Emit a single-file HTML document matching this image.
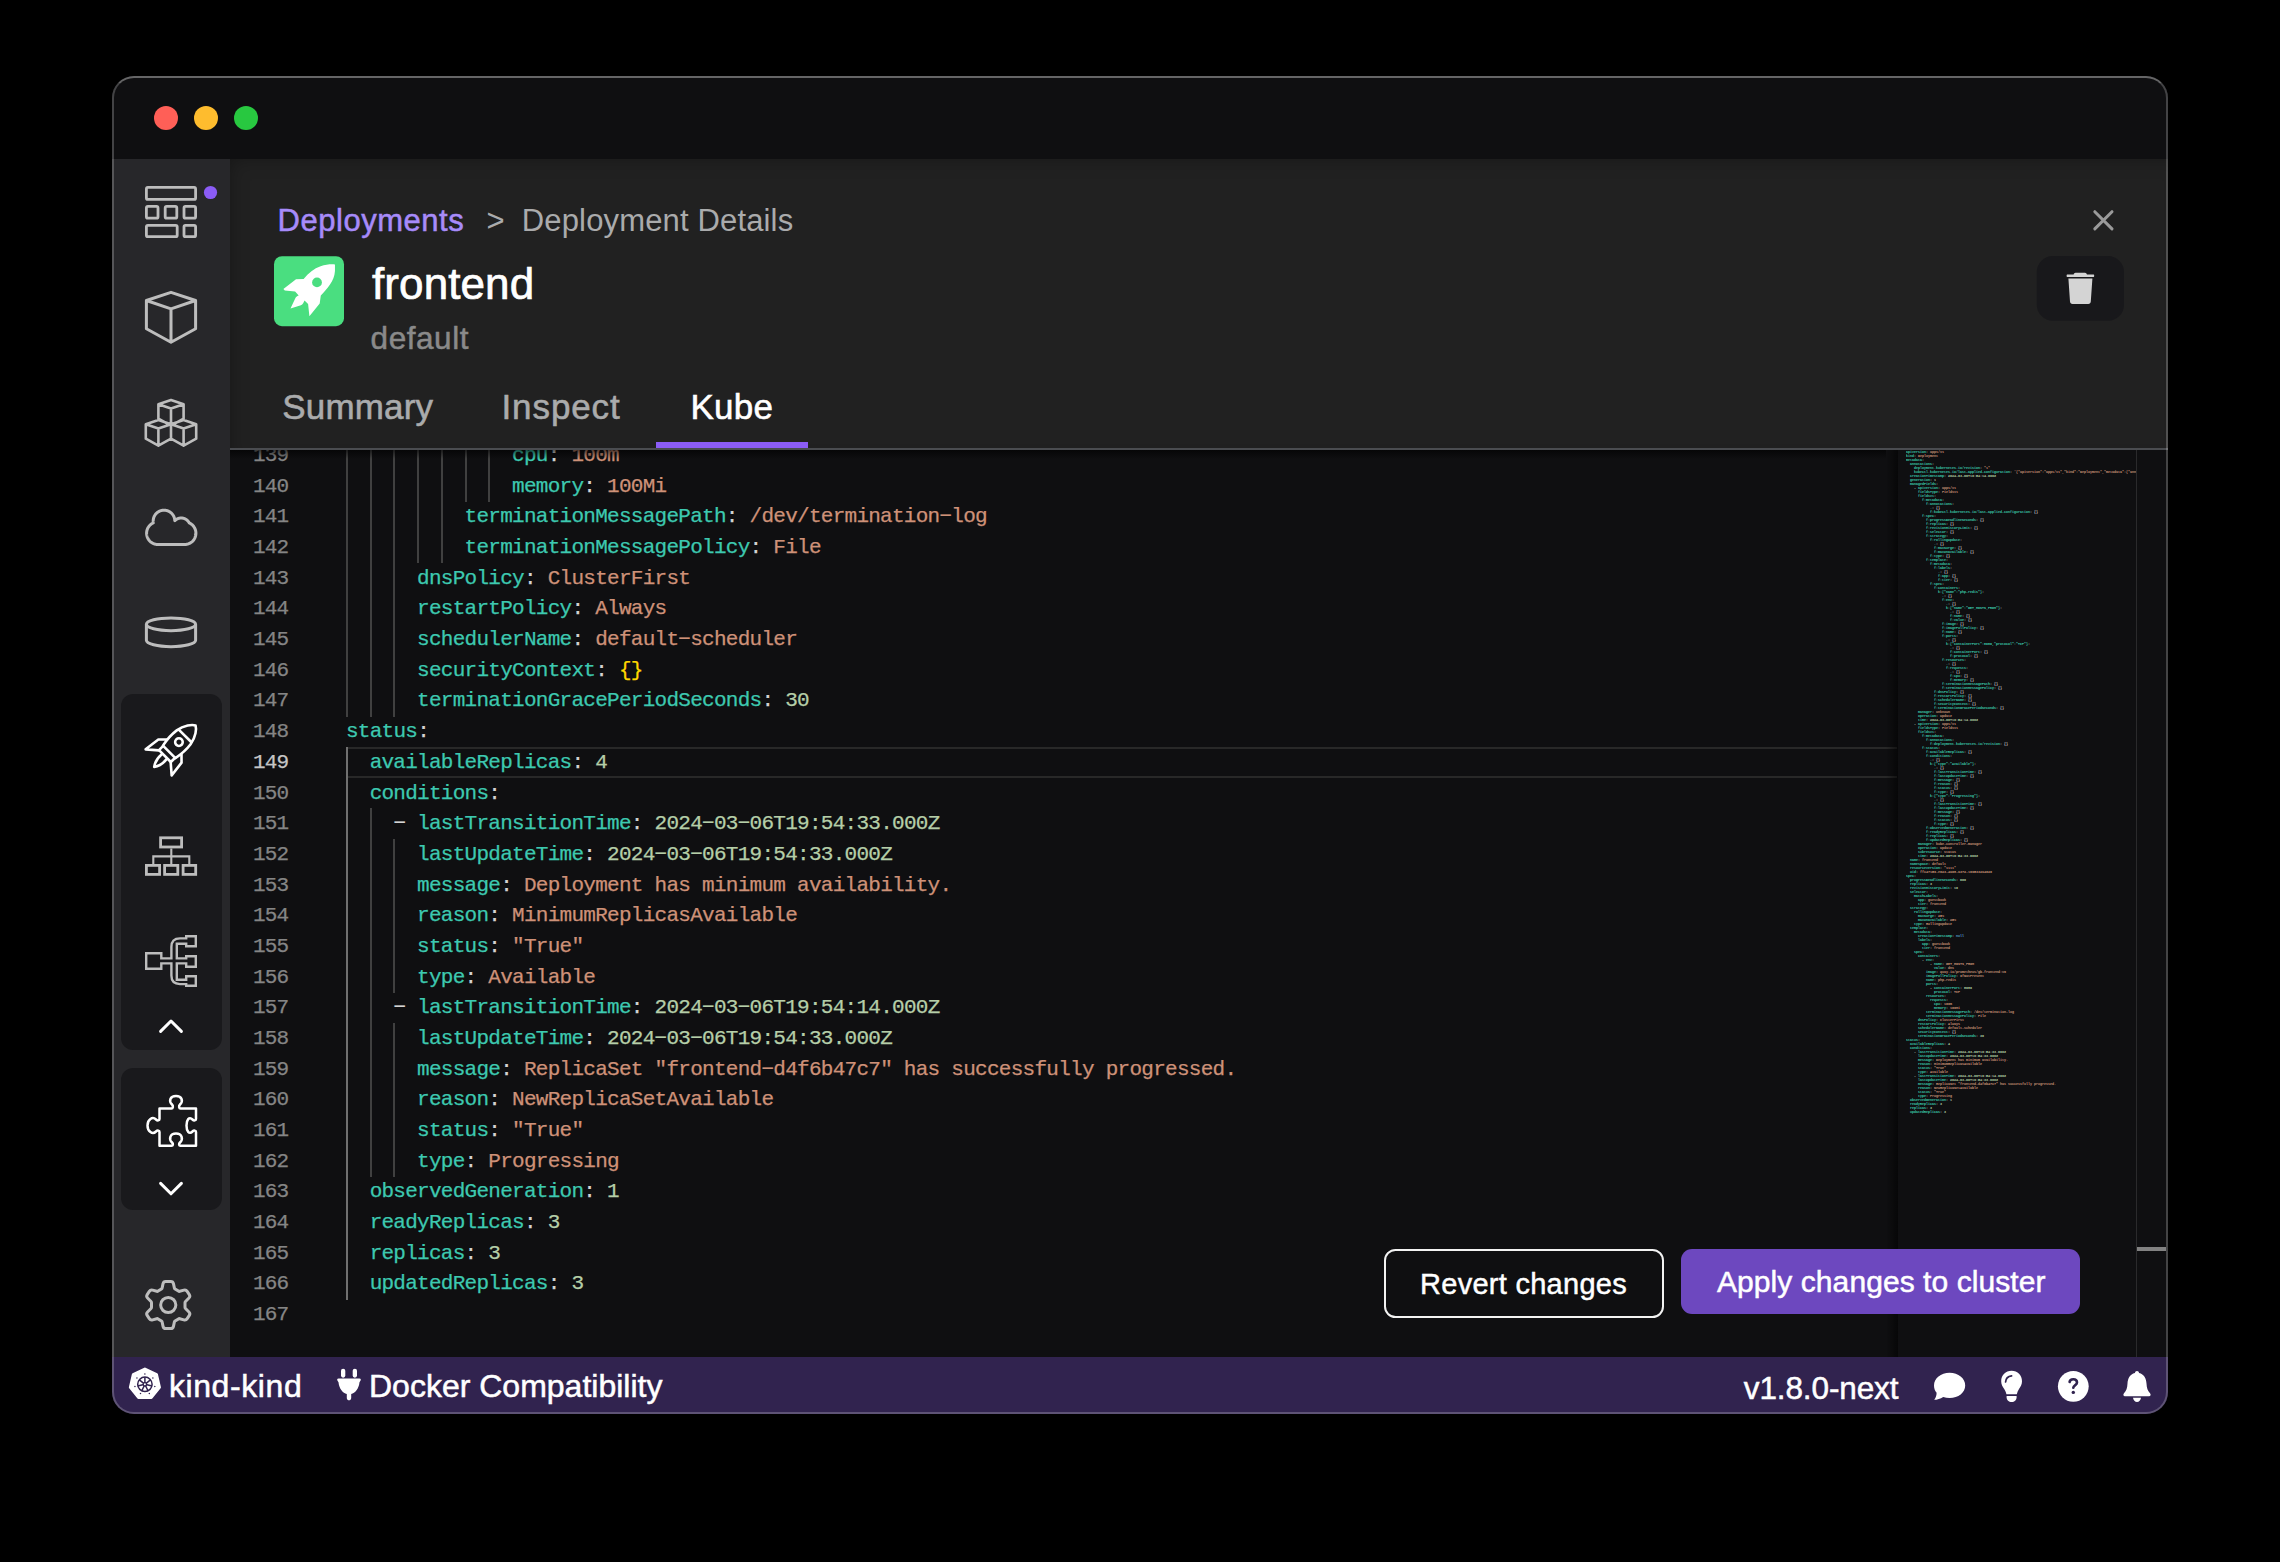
<!DOCTYPE html>
<html><head><meta charset="utf-8"><title>Podman Desktop - Kube</title>
<style>
html,body{margin:0;padding:0;background:#000;font-family:"Liberation Sans",sans-serif;width:2280px;height:1562px;overflow:hidden}
.win{position:absolute;left:112px;top:76px;width:2056px;height:1338px;border-radius:22px;overflow:hidden;background:#0f0f11}
.inner{position:absolute;left:-112px;top:-76px;width:2280px;height:1562px}
.t{position:absolute;white-space:pre;font-family:"Liberation Sans",sans-serif}
.m{position:absolute;white-space:pre;-webkit-text-stroke:0.25px currentColor;font-family:"Liberation Mono",monospace;font-size:21px;line-height:30px;letter-spacing:-0.730px}
.ln{left:240px;width:48.5px;text-align:right}
.abs{position:absolute}
</style></head><body>
<div class="win"><div class="inner">

<div class="abs" style="left:112px;top:76px;width:2056px;height:83px;background:#0f0f11"></div>
<div class="abs" style="left:153.8px;top:105.8px;width:24.4px;height:24.4px;border-radius:50%;background:#ff5f57"></div>
<div class="abs" style="left:193.8px;top:105.8px;width:24.4px;height:24.4px;border-radius:50%;background:#febc2e"></div>
<div class="abs" style="left:233.8px;top:105.8px;width:24.4px;height:24.4px;border-radius:50%;background:#28c840"></div>
<div class="abs" style="left:112px;top:159px;width:118px;height:1198px;background:#27272a"></div>
<div class="abs" style="left:121.4px;top:693.8px;width:100.4px;height:356.2px;border-radius:12px;background:#19191c"></div>
<div class="abs" style="left:121.4px;top:1068px;width:100.4px;height:142px;border-radius:12px;background:#19191c"></div>
<div class="abs" style="left:230px;top:159px;width:1938px;height:289px;background:#212121;box-shadow:inset 8px 8px 20px -10px rgba(0,0,0,0.35)"></div>
<div class="abs" style="left:230px;top:448px;width:1938px;height:2px;background:#4a4c50"></div>
<div class="abs" style="left:230px;top:450px;width:1938px;height:907px;background:#0f0f11;overflow:hidden"></div>
<div class="abs" style="left:0;top:450px;width:2280px;height:907px;overflow:hidden"><div class="abs" style="left:0;top:-450px;width:2280px;height:1562px">
<div style="position:absolute;left:346px;top:747.12px;width:1551px;height:26.68px;border-top:2px solid #282828;border-bottom:2px solid #282828"></div>
<div style="position:absolute;left:345.90px;top:440.12px;width:2px;height:31.18px;background:#404040"></div>
<div style="position:absolute;left:369.64px;top:440.12px;width:2px;height:31.18px;background:#404040"></div>
<div style="position:absolute;left:393.38px;top:440.12px;width:2px;height:31.18px;background:#404040"></div>
<div style="position:absolute;left:417.12px;top:440.12px;width:2px;height:31.18px;background:#404040"></div>
<div style="position:absolute;left:440.86px;top:440.12px;width:2px;height:31.18px;background:#404040"></div>
<div style="position:absolute;left:464.60px;top:440.12px;width:2px;height:31.18px;background:#404040"></div>
<div style="position:absolute;left:488.34px;top:440.12px;width:2px;height:31.18px;background:#404040"></div>
<div style="position:absolute;left:345.90px;top:470.80px;width:2px;height:31.18px;background:#404040"></div>
<div style="position:absolute;left:369.64px;top:470.80px;width:2px;height:31.18px;background:#404040"></div>
<div style="position:absolute;left:393.38px;top:470.80px;width:2px;height:31.18px;background:#404040"></div>
<div style="position:absolute;left:417.12px;top:470.80px;width:2px;height:31.18px;background:#404040"></div>
<div style="position:absolute;left:440.86px;top:470.80px;width:2px;height:31.18px;background:#404040"></div>
<div style="position:absolute;left:464.60px;top:470.80px;width:2px;height:31.18px;background:#404040"></div>
<div style="position:absolute;left:488.34px;top:470.80px;width:2px;height:31.18px;background:#404040"></div>
<div style="position:absolute;left:345.90px;top:501.48px;width:2px;height:31.18px;background:#404040"></div>
<div style="position:absolute;left:369.64px;top:501.48px;width:2px;height:31.18px;background:#404040"></div>
<div style="position:absolute;left:393.38px;top:501.48px;width:2px;height:31.18px;background:#404040"></div>
<div style="position:absolute;left:417.12px;top:501.48px;width:2px;height:31.18px;background:#404040"></div>
<div style="position:absolute;left:440.86px;top:501.48px;width:2px;height:31.18px;background:#404040"></div>
<div style="position:absolute;left:345.90px;top:532.16px;width:2px;height:31.18px;background:#404040"></div>
<div style="position:absolute;left:369.64px;top:532.16px;width:2px;height:31.18px;background:#404040"></div>
<div style="position:absolute;left:393.38px;top:532.16px;width:2px;height:31.18px;background:#404040"></div>
<div style="position:absolute;left:417.12px;top:532.16px;width:2px;height:31.18px;background:#404040"></div>
<div style="position:absolute;left:440.86px;top:532.16px;width:2px;height:31.18px;background:#404040"></div>
<div style="position:absolute;left:345.90px;top:562.84px;width:2px;height:31.18px;background:#404040"></div>
<div style="position:absolute;left:369.64px;top:562.84px;width:2px;height:31.18px;background:#404040"></div>
<div style="position:absolute;left:393.38px;top:562.84px;width:2px;height:31.18px;background:#404040"></div>
<div style="position:absolute;left:345.90px;top:593.52px;width:2px;height:31.18px;background:#404040"></div>
<div style="position:absolute;left:369.64px;top:593.52px;width:2px;height:31.18px;background:#404040"></div>
<div style="position:absolute;left:393.38px;top:593.52px;width:2px;height:31.18px;background:#404040"></div>
<div style="position:absolute;left:345.90px;top:624.20px;width:2px;height:31.18px;background:#404040"></div>
<div style="position:absolute;left:369.64px;top:624.20px;width:2px;height:31.18px;background:#404040"></div>
<div style="position:absolute;left:393.38px;top:624.20px;width:2px;height:31.18px;background:#404040"></div>
<div style="position:absolute;left:345.90px;top:654.88px;width:2px;height:31.18px;background:#404040"></div>
<div style="position:absolute;left:369.64px;top:654.88px;width:2px;height:31.18px;background:#404040"></div>
<div style="position:absolute;left:393.38px;top:654.88px;width:2px;height:31.18px;background:#404040"></div>
<div style="position:absolute;left:345.90px;top:685.56px;width:2px;height:31.18px;background:#404040"></div>
<div style="position:absolute;left:369.64px;top:685.56px;width:2px;height:31.18px;background:#404040"></div>
<div style="position:absolute;left:393.38px;top:685.56px;width:2px;height:31.18px;background:#404040"></div>
<div style="position:absolute;left:345.90px;top:746.92px;width:2px;height:31.18px;background:#707070"></div>
<div style="position:absolute;left:345.90px;top:777.60px;width:2px;height:31.18px;background:#707070"></div>
<div style="position:absolute;left:345.90px;top:1176.44px;width:2px;height:31.18px;background:#707070"></div>
<div style="position:absolute;left:345.90px;top:1207.12px;width:2px;height:31.18px;background:#707070"></div>
<div style="position:absolute;left:345.90px;top:1237.80px;width:2px;height:31.18px;background:#707070"></div>
<div style="position:absolute;left:345.90px;top:1268.48px;width:2px;height:31.18px;background:#707070"></div>
<div style="position:absolute;left:345.90px;top:808.28px;width:2px;height:31.18px;background:#707070"></div>
<div style="position:absolute;left:369.64px;top:808.28px;width:2px;height:31.18px;background:#404040"></div>
<div style="position:absolute;left:345.90px;top:992.36px;width:2px;height:31.18px;background:#707070"></div>
<div style="position:absolute;left:369.64px;top:992.36px;width:2px;height:31.18px;background:#404040"></div>
<div style="position:absolute;left:345.90px;top:838.96px;width:2px;height:31.18px;background:#707070"></div>
<div style="position:absolute;left:369.64px;top:838.96px;width:2px;height:31.18px;background:#404040"></div>
<div style="position:absolute;left:393.38px;top:838.96px;width:2px;height:31.18px;background:#404040"></div>
<div style="position:absolute;left:345.90px;top:869.64px;width:2px;height:31.18px;background:#707070"></div>
<div style="position:absolute;left:369.64px;top:869.64px;width:2px;height:31.18px;background:#404040"></div>
<div style="position:absolute;left:393.38px;top:869.64px;width:2px;height:31.18px;background:#404040"></div>
<div style="position:absolute;left:345.90px;top:900.32px;width:2px;height:31.18px;background:#707070"></div>
<div style="position:absolute;left:369.64px;top:900.32px;width:2px;height:31.18px;background:#404040"></div>
<div style="position:absolute;left:393.38px;top:900.32px;width:2px;height:31.18px;background:#404040"></div>
<div style="position:absolute;left:345.90px;top:931.00px;width:2px;height:31.18px;background:#707070"></div>
<div style="position:absolute;left:369.64px;top:931.00px;width:2px;height:31.18px;background:#404040"></div>
<div style="position:absolute;left:393.38px;top:931.00px;width:2px;height:31.18px;background:#404040"></div>
<div style="position:absolute;left:345.90px;top:961.68px;width:2px;height:31.18px;background:#707070"></div>
<div style="position:absolute;left:369.64px;top:961.68px;width:2px;height:31.18px;background:#404040"></div>
<div style="position:absolute;left:393.38px;top:961.68px;width:2px;height:31.18px;background:#404040"></div>
<div style="position:absolute;left:345.90px;top:1023.04px;width:2px;height:31.18px;background:#707070"></div>
<div style="position:absolute;left:369.64px;top:1023.04px;width:2px;height:31.18px;background:#404040"></div>
<div style="position:absolute;left:393.38px;top:1023.04px;width:2px;height:31.18px;background:#404040"></div>
<div style="position:absolute;left:345.90px;top:1053.72px;width:2px;height:31.18px;background:#707070"></div>
<div style="position:absolute;left:369.64px;top:1053.72px;width:2px;height:31.18px;background:#404040"></div>
<div style="position:absolute;left:393.38px;top:1053.72px;width:2px;height:31.18px;background:#404040"></div>
<div style="position:absolute;left:345.90px;top:1084.40px;width:2px;height:31.18px;background:#707070"></div>
<div style="position:absolute;left:369.64px;top:1084.40px;width:2px;height:31.18px;background:#404040"></div>
<div style="position:absolute;left:393.38px;top:1084.40px;width:2px;height:31.18px;background:#404040"></div>
<div style="position:absolute;left:345.90px;top:1115.08px;width:2px;height:31.18px;background:#707070"></div>
<div style="position:absolute;left:369.64px;top:1115.08px;width:2px;height:31.18px;background:#404040"></div>
<div style="position:absolute;left:393.38px;top:1115.08px;width:2px;height:31.18px;background:#404040"></div>
<div style="position:absolute;left:345.90px;top:1145.76px;width:2px;height:31.18px;background:#707070"></div>
<div style="position:absolute;left:369.64px;top:1145.76px;width:2px;height:31.18px;background:#404040"></div>
<div style="position:absolute;left:393.38px;top:1145.76px;width:2px;height:31.18px;background:#404040"></div>
<div class="m ln" style="top:441.02px;color:#858585">139</div>
<div class="m" style="left:512.08px;top:441.02px"><span style="color:#3dc9b0">cpu</span><span style="color:#d4d4d4">: </span><span style="color:#ce9178">100m</span></div>
<div class="m ln" style="top:471.70px;color:#858585">140</div>
<div class="m" style="left:512.08px;top:471.70px"><span style="color:#3dc9b0">memory</span><span style="color:#d4d4d4">: </span><span style="color:#ce9178">100Mi</span></div>
<div class="m ln" style="top:502.38px;color:#858585">141</div>
<div class="m" style="left:464.60px;top:502.38px"><span style="color:#3dc9b0">terminationMessagePath</span><span style="color:#d4d4d4">: </span><span style="color:#ce9178">/dev/termination&#8722;log</span></div>
<div class="m ln" style="top:533.06px;color:#858585">142</div>
<div class="m" style="left:464.60px;top:533.06px"><span style="color:#3dc9b0">terminationMessagePolicy</span><span style="color:#d4d4d4">: </span><span style="color:#ce9178">File</span></div>
<div class="m ln" style="top:563.74px;color:#858585">143</div>
<div class="m" style="left:417.12px;top:563.74px"><span style="color:#3dc9b0">dnsPolicy</span><span style="color:#d4d4d4">: </span><span style="color:#ce9178">ClusterFirst</span></div>
<div class="m ln" style="top:594.42px;color:#858585">144</div>
<div class="m" style="left:417.12px;top:594.42px"><span style="color:#3dc9b0">restartPolicy</span><span style="color:#d4d4d4">: </span><span style="color:#ce9178">Always</span></div>
<div class="m ln" style="top:625.10px;color:#858585">145</div>
<div class="m" style="left:417.12px;top:625.10px"><span style="color:#3dc9b0">schedulerName</span><span style="color:#d4d4d4">: </span><span style="color:#ce9178">default&#8722;scheduler</span></div>
<div class="m ln" style="top:655.78px;color:#858585">146</div>
<div class="m" style="left:417.12px;top:655.78px"><span style="color:#3dc9b0">securityContext</span><span style="color:#d4d4d4">: </span><span style="color:#ffd700">{}</span></div>
<div class="m ln" style="top:686.46px;color:#858585">147</div>
<div class="m" style="left:417.12px;top:686.46px"><span style="color:#3dc9b0">terminationGracePeriodSeconds</span><span style="color:#d4d4d4">: </span><span style="color:#b5cea8">30</span></div>
<div class="m ln" style="top:717.14px;color:#858585">148</div>
<div class="m" style="left:345.90px;top:717.14px"><span style="color:#3dc9b0">status</span><span style="color:#d4d4d4">:</span></div>
<div class="m ln" style="top:747.82px;color:#c6c6c6">149</div>
<div class="m" style="left:369.64px;top:747.82px"><span style="color:#3dc9b0">availableReplicas</span><span style="color:#d4d4d4">: </span><span style="color:#b5cea8">4</span></div>
<div class="m ln" style="top:778.50px;color:#858585">150</div>
<div class="m" style="left:369.64px;top:778.50px"><span style="color:#3dc9b0">conditions</span><span style="color:#d4d4d4">:</span></div>
<div class="m ln" style="top:809.18px;color:#858585">151</div>
<div class="m" style="left:393.38px;top:809.18px"><span style="color:#d4d4d4">&#8722; </span><span style="color:#3dc9b0">lastTransitionTime</span><span style="color:#d4d4d4">: </span><span style="color:#b5cea8">2024&#8722;03&#8722;06T19:54:33.000Z</span></div>
<div class="m ln" style="top:839.86px;color:#858585">152</div>
<div class="m" style="left:417.12px;top:839.86px"><span style="color:#3dc9b0">lastUpdateTime</span><span style="color:#d4d4d4">: </span><span style="color:#b5cea8">2024&#8722;03&#8722;06T19:54:33.000Z</span></div>
<div class="m ln" style="top:870.54px;color:#858585">153</div>
<div class="m" style="left:417.12px;top:870.54px"><span style="color:#3dc9b0">message</span><span style="color:#d4d4d4">: </span><span style="color:#ce9178">Deployment has minimum availability.</span></div>
<div class="m ln" style="top:901.22px;color:#858585">154</div>
<div class="m" style="left:417.12px;top:901.22px"><span style="color:#3dc9b0">reason</span><span style="color:#d4d4d4">: </span><span style="color:#ce9178">MinimumReplicasAvailable</span></div>
<div class="m ln" style="top:931.90px;color:#858585">155</div>
<div class="m" style="left:417.12px;top:931.90px"><span style="color:#3dc9b0">status</span><span style="color:#d4d4d4">: </span><span style="color:#ce9178">&quot;True&quot;</span></div>
<div class="m ln" style="top:962.58px;color:#858585">156</div>
<div class="m" style="left:417.12px;top:962.58px"><span style="color:#3dc9b0">type</span><span style="color:#d4d4d4">: </span><span style="color:#ce9178">Available</span></div>
<div class="m ln" style="top:993.26px;color:#858585">157</div>
<div class="m" style="left:393.38px;top:993.26px"><span style="color:#d4d4d4">&#8722; </span><span style="color:#3dc9b0">lastTransitionTime</span><span style="color:#d4d4d4">: </span><span style="color:#b5cea8">2024&#8722;03&#8722;06T19:54:14.000Z</span></div>
<div class="m ln" style="top:1023.94px;color:#858585">158</div>
<div class="m" style="left:417.12px;top:1023.94px"><span style="color:#3dc9b0">lastUpdateTime</span><span style="color:#d4d4d4">: </span><span style="color:#b5cea8">2024&#8722;03&#8722;06T19:54:33.000Z</span></div>
<div class="m ln" style="top:1054.62px;color:#858585">159</div>
<div class="m" style="left:417.12px;top:1054.62px"><span style="color:#3dc9b0">message</span><span style="color:#d4d4d4">: </span><span style="color:#ce9178">ReplicaSet &quot;frontend&#8722;d4f6b47c7&quot; has successfully progressed.</span></div>
<div class="m ln" style="top:1085.30px;color:#858585">160</div>
<div class="m" style="left:417.12px;top:1085.30px"><span style="color:#3dc9b0">reason</span><span style="color:#d4d4d4">: </span><span style="color:#ce9178">NewReplicaSetAvailable</span></div>
<div class="m ln" style="top:1115.98px;color:#858585">161</div>
<div class="m" style="left:417.12px;top:1115.98px"><span style="color:#3dc9b0">status</span><span style="color:#d4d4d4">: </span><span style="color:#ce9178">&quot;True&quot;</span></div>
<div class="m ln" style="top:1146.66px;color:#858585">162</div>
<div class="m" style="left:417.12px;top:1146.66px"><span style="color:#3dc9b0">type</span><span style="color:#d4d4d4">: </span><span style="color:#ce9178">Progressing</span></div>
<div class="m ln" style="top:1177.34px;color:#858585">163</div>
<div class="m" style="left:369.64px;top:1177.34px"><span style="color:#3dc9b0">observedGeneration</span><span style="color:#d4d4d4">: </span><span style="color:#b5cea8">1</span></div>
<div class="m ln" style="top:1208.02px;color:#858585">164</div>
<div class="m" style="left:369.64px;top:1208.02px"><span style="color:#3dc9b0">readyReplicas</span><span style="color:#d4d4d4">: </span><span style="color:#b5cea8">3</span></div>
<div class="m ln" style="top:1238.70px;color:#858585">165</div>
<div class="m" style="left:369.64px;top:1238.70px"><span style="color:#3dc9b0">replicas</span><span style="color:#d4d4d4">: </span><span style="color:#b5cea8">3</span></div>
<div class="m ln" style="top:1269.38px;color:#858585">166</div>
<div class="m" style="left:369.64px;top:1269.38px"><span style="color:#3dc9b0">updatedReplicas</span><span style="color:#d4d4d4">: </span><span style="color:#b5cea8">3</span></div>
<div class="m ln" style="top:1300.06px;color:#858585">167</div>
<div class="abs" style="left:1906px;top:450px;width:1380px;height:6000px;overflow:hidden;transform:scale(0.16667);transform-origin:0 0;font-family:'Liberation Mono',monospace;font-size:20px;line-height:24px;white-space:pre;font-weight:700;opacity:1"><div><span style="color:#3dc9b0">apiVersion</span><span style="color:#d4d4d4">:</span> <span style="color:#ce9178">apps/v1</span></div><div><span style="color:#3dc9b0">kind</span><span style="color:#d4d4d4">:</span> <span style="color:#ce9178">Deployment</span></div><div><span style="color:#3dc9b0">metadata</span><span style="color:#d4d4d4">:</span></div><div>  <span style="color:#3dc9b0">annotations</span><span style="color:#d4d4d4">:</span></div><div>    <span style="color:#3dc9b0">deployment.kubernetes.io/revision</span><span style="color:#d4d4d4">:</span> <span style="color:#ce9178">&quot;1&quot;</span></div><div>    <span style="color:#3dc9b0">kubectl.kubernetes.io/last-applied-configuration</span><span style="color:#d4d4d4">:</span> <span style="color:#ce9178">&#x27;{&quot;apiVersion&quot;:&quot;apps/v1&quot;,&quot;kind&quot;:&quot;Deployment&quot;,&quot;metadata&quot;:{&quot;annotations&quot;:{},&quot;name&quot;:&quot;frontend&quot;,&quot;namespace&quot;:&quot;default&quot;},&quot;spec&quot;:{&quot;replicas&quot;:3}}&#x27;</span></div><div>  <span style="color:#3dc9b0">creationTimestamp</span><span style="color:#d4d4d4">:</span> <span style="color:#b5cea8">2024-03-06T19:54:14.000Z</span></div><div>  <span style="color:#3dc9b0">generation</span><span style="color:#d4d4d4">:</span> <span style="color:#b5cea8">1</span></div><div>  <span style="color:#3dc9b0">managedFields</span><span style="color:#d4d4d4">:</span></div><div>    <span style="color:#d4d4d4">- </span><span style="color:#3dc9b0">apiVersion</span><span style="color:#d4d4d4">:</span> <span style="color:#ce9178">apps/v1</span></div><div>      <span style="color:#3dc9b0">fieldsType</span><span style="color:#d4d4d4">:</span> <span style="color:#ce9178">FieldsV1</span></div><div>      <span style="color:#3dc9b0">fieldsV1</span><span style="color:#d4d4d4">:</span></div><div>        <span style="color:#3dc9b0">f:metadata</span><span style="color:#d4d4d4">:</span></div><div>          <span style="color:#3dc9b0">f:annotations</span><span style="color:#d4d4d4">:</span></div><div>            <span style="color:#3dc9b0">.</span><span style="color:#d4d4d4">:</span> <span style="color:#d4d4d4">{}</span></div><div>            <span style="color:#3dc9b0">f:kubectl.kubernetes.io/last-applied-configuration</span><span style="color:#d4d4d4">:</span> <span style="color:#d4d4d4">{}</span></div><div>        <span style="color:#3dc9b0">f:spec</span><span style="color:#d4d4d4">:</span></div><div>          <span style="color:#3dc9b0">f:progressDeadlineSeconds</span><span style="color:#d4d4d4">:</span> <span style="color:#d4d4d4">{}</span></div><div>          <span style="color:#3dc9b0">f:replicas</span><span style="color:#d4d4d4">:</span> <span style="color:#d4d4d4">{}</span></div><div>          <span style="color:#3dc9b0">f:revisionHistoryLimit</span><span style="color:#d4d4d4">:</span> <span style="color:#d4d4d4">{}</span></div><div>          <span style="color:#3dc9b0">f:selector</span><span style="color:#d4d4d4">:</span> <span style="color:#d4d4d4">{}</span></div><div>          <span style="color:#3dc9b0">f:strategy</span><span style="color:#d4d4d4">:</span></div><div>            <span style="color:#3dc9b0">f:rollingUpdate</span><span style="color:#d4d4d4">:</span></div><div>              <span style="color:#3dc9b0">.</span><span style="color:#d4d4d4">:</span> <span style="color:#d4d4d4">{}</span></div><div>              <span style="color:#3dc9b0">f:maxSurge</span><span style="color:#d4d4d4">:</span> <span style="color:#d4d4d4">{}</span></div><div>              <span style="color:#3dc9b0">f:maxUnavailable</span><span style="color:#d4d4d4">:</span> <span style="color:#d4d4d4">{}</span></div><div>            <span style="color:#3dc9b0">f:type</span><span style="color:#d4d4d4">:</span> <span style="color:#d4d4d4">{}</span></div><div>          <span style="color:#3dc9b0">f:template</span><span style="color:#d4d4d4">:</span></div><div>            <span style="color:#3dc9b0">f:metadata</span><span style="color:#d4d4d4">:</span></div><div>              <span style="color:#3dc9b0">f:labels</span><span style="color:#d4d4d4">:</span></div><div>                <span style="color:#3dc9b0">.</span><span style="color:#d4d4d4">:</span> <span style="color:#d4d4d4">{}</span></div><div>                <span style="color:#3dc9b0">f:app</span><span style="color:#d4d4d4">:</span> <span style="color:#d4d4d4">{}</span></div><div>                <span style="color:#3dc9b0">f:tier</span><span style="color:#d4d4d4">:</span> <span style="color:#d4d4d4">{}</span></div><div>            <span style="color:#3dc9b0">f:spec</span><span style="color:#d4d4d4">:</span></div><div>              <span style="color:#3dc9b0">f:containers</span><span style="color:#d4d4d4">:</span></div><div>                <span style="color:#3dc9b0">k:{&quot;name&quot;:&quot;php-redis&quot;}</span><span style="color:#d4d4d4">:</span></div><div>                  <span style="color:#3dc9b0">.</span><span style="color:#d4d4d4">:</span> <span style="color:#d4d4d4">{}</span></div><div>                  <span style="color:#3dc9b0">f:env</span><span style="color:#d4d4d4">:</span></div><div>                    <span style="color:#3dc9b0">.</span><span style="color:#d4d4d4">:</span> <span style="color:#d4d4d4">{}</span></div><div>                    <span style="color:#3dc9b0">k:{&quot;name&quot;:&quot;GET_HOSTS_FROM&quot;}</span><span style="color:#d4d4d4">:</span></div><div>                      <span style="color:#3dc9b0">.</span><span style="color:#d4d4d4">:</span> <span style="color:#d4d4d4">{}</span></div><div>                      <span style="color:#3dc9b0">f:name</span><span style="color:#d4d4d4">:</span> <span style="color:#d4d4d4">{}</span></div><div>                      <span style="color:#3dc9b0">f:value</span><span style="color:#d4d4d4">:</span> <span style="color:#d4d4d4">{}</span></div><div>                  <span style="color:#3dc9b0">f:image</span><span style="color:#d4d4d4">:</span> <span style="color:#d4d4d4">{}</span></div><div>                  <span style="color:#3dc9b0">f:imagePullPolicy</span><span style="color:#d4d4d4">:</span> <span style="color:#d4d4d4">{}</span></div><div>                  <span style="color:#3dc9b0">f:name</span><span style="color:#d4d4d4">:</span> <span style="color:#d4d4d4">{}</span></div><div>                  <span style="color:#3dc9b0">f:ports</span><span style="color:#d4d4d4">:</span></div><div>                    <span style="color:#3dc9b0">.</span><span style="color:#d4d4d4">:</span> <span style="color:#d4d4d4">{}</span></div><div>                    <span style="color:#3dc9b0">k:{&quot;containerPort&quot;:8080,&quot;protocol&quot;:&quot;TCP&quot;}</span><span style="color:#d4d4d4">:</span></div><div>                      <span style="color:#3dc9b0">.</span><span style="color:#d4d4d4">:</span> <span style="color:#d4d4d4">{}</span></div><div>                      <span style="color:#3dc9b0">f:containerPort</span><span style="color:#d4d4d4">:</span> <span style="color:#d4d4d4">{}</span></div><div>                      <span style="color:#3dc9b0">f:protocol</span><span style="color:#d4d4d4">:</span> <span style="color:#d4d4d4">{}</span></div><div>                  <span style="color:#3dc9b0">f:resources</span><span style="color:#d4d4d4">:</span></div><div>                    <span style="color:#3dc9b0">.</span><span style="color:#d4d4d4">:</span> <span style="color:#d4d4d4">{}</span></div><div>                    <span style="color:#3dc9b0">f:requests</span><span style="color:#d4d4d4">:</span></div><div>                      <span style="color:#3dc9b0">.</span><span style="color:#d4d4d4">:</span> <span style="color:#d4d4d4">{}</span></div><div>                      <span style="color:#3dc9b0">f:cpu</span><span style="color:#d4d4d4">:</span> <span style="color:#d4d4d4">{}</span></div><div>                      <span style="color:#3dc9b0">f:memory</span><span style="color:#d4d4d4">:</span> <span style="color:#d4d4d4">{}</span></div><div>                  <span style="color:#3dc9b0">f:terminationMessagePath</span><span style="color:#d4d4d4">:</span> <span style="color:#d4d4d4">{}</span></div><div>                  <span style="color:#3dc9b0">f:terminationMessagePolicy</span><span style="color:#d4d4d4">:</span> <span style="color:#d4d4d4">{}</span></div><div>              <span style="color:#3dc9b0">f:dnsPolicy</span><span style="color:#d4d4d4">:</span> <span style="color:#d4d4d4">{}</span></div><div>              <span style="color:#3dc9b0">f:restartPolicy</span><span style="color:#d4d4d4">:</span> <span style="color:#d4d4d4">{}</span></div><div>              <span style="color:#3dc9b0">f:schedulerName</span><span style="color:#d4d4d4">:</span> <span style="color:#d4d4d4">{}</span></div><div>              <span style="color:#3dc9b0">f:securityContext</span><span style="color:#d4d4d4">:</span> <span style="color:#d4d4d4">{}</span></div><div>              <span style="color:#3dc9b0">f:terminationGracePeriodSeconds</span><span style="color:#d4d4d4">:</span> <span style="color:#d4d4d4">{}</span></div><div>      <span style="color:#3dc9b0">manager</span><span style="color:#d4d4d4">:</span> <span style="color:#ce9178">unknown</span></div><div>      <span style="color:#3dc9b0">operation</span><span style="color:#d4d4d4">:</span> <span style="color:#ce9178">Update</span></div><div>      <span style="color:#3dc9b0">time</span><span style="color:#d4d4d4">:</span> <span style="color:#b5cea8">2024-03-06T19:54:14.000Z</span></div><div>    <span style="color:#d4d4d4">- </span><span style="color:#3dc9b0">apiVersion</span><span style="color:#d4d4d4">:</span> <span style="color:#ce9178">apps/v1</span></div><div>      <span style="color:#3dc9b0">fieldsType</span><span style="color:#d4d4d4">:</span> <span style="color:#ce9178">FieldsV1</span></div><div>      <span style="color:#3dc9b0">fieldsV1</span><span style="color:#d4d4d4">:</span></div><div>        <span style="color:#3dc9b0">f:metadata</span><span style="color:#d4d4d4">:</span></div><div>          <span style="color:#3dc9b0">f:annotations</span><span style="color:#d4d4d4">:</span></div><div>            <span style="color:#3dc9b0">f:deployment.kubernetes.io/revision</span><span style="color:#d4d4d4">:</span> <span style="color:#d4d4d4">{}</span></div><div>        <span style="color:#3dc9b0">f:status</span><span style="color:#d4d4d4">:</span></div><div>          <span style="color:#3dc9b0">f:availableReplicas</span><span style="color:#d4d4d4">:</span> <span style="color:#d4d4d4">{}</span></div><div>          <span style="color:#3dc9b0">f:conditions</span><span style="color:#d4d4d4">:</span></div><div>            <span style="color:#3dc9b0">.</span><span style="color:#d4d4d4">:</span> <span style="color:#d4d4d4">{}</span></div><div>            <span style="color:#3dc9b0">k:{&quot;type&quot;:&quot;Available&quot;}</span><span style="color:#d4d4d4">:</span></div><div>              <span style="color:#3dc9b0">.</span><span style="color:#d4d4d4">:</span> <span style="color:#d4d4d4">{}</span></div><div>              <span style="color:#3dc9b0">f:lastTransitionTime</span><span style="color:#d4d4d4">:</span> <span style="color:#d4d4d4">{}</span></div><div>              <span style="color:#3dc9b0">f:lastUpdateTime</span><span style="color:#d4d4d4">:</span> <span style="color:#d4d4d4">{}</span></div><div>              <span style="color:#3dc9b0">f:message</span><span style="color:#d4d4d4">:</span> <span style="color:#d4d4d4">{}</span></div><div>              <span style="color:#3dc9b0">f:reason</span><span style="color:#d4d4d4">:</span> <span style="color:#d4d4d4">{}</span></div><div>              <span style="color:#3dc9b0">f:status</span><span style="color:#d4d4d4">:</span> <span style="color:#d4d4d4">{}</span></div><div>              <span style="color:#3dc9b0">f:type</span><span style="color:#d4d4d4">:</span> <span style="color:#d4d4d4">{}</span></div><div>            <span style="color:#3dc9b0">k:{&quot;type&quot;:&quot;Progressing&quot;}</span><span style="color:#d4d4d4">:</span></div><div>              <span style="color:#3dc9b0">.</span><span style="color:#d4d4d4">:</span> <span style="color:#d4d4d4">{}</span></div><div>              <span style="color:#3dc9b0">f:lastTransitionTime</span><span style="color:#d4d4d4">:</span> <span style="color:#d4d4d4">{}</span></div><div>              <span style="color:#3dc9b0">f:lastUpdateTime</span><span style="color:#d4d4d4">:</span> <span style="color:#d4d4d4">{}</span></div><div>              <span style="color:#3dc9b0">f:message</span><span style="color:#d4d4d4">:</span> <span style="color:#d4d4d4">{}</span></div><div>              <span style="color:#3dc9b0">f:reason</span><span style="color:#d4d4d4">:</span> <span style="color:#d4d4d4">{}</span></div><div>              <span style="color:#3dc9b0">f:status</span><span style="color:#d4d4d4">:</span> <span style="color:#d4d4d4">{}</span></div><div>              <span style="color:#3dc9b0">f:type</span><span style="color:#d4d4d4">:</span> <span style="color:#d4d4d4">{}</span></div><div>          <span style="color:#3dc9b0">f:observedGeneration</span><span style="color:#d4d4d4">:</span> <span style="color:#d4d4d4">{}</span></div><div>          <span style="color:#3dc9b0">f:readyReplicas</span><span style="color:#d4d4d4">:</span> <span style="color:#d4d4d4">{}</span></div><div>          <span style="color:#3dc9b0">f:replicas</span><span style="color:#d4d4d4">:</span> <span style="color:#d4d4d4">{}</span></div><div>          <span style="color:#3dc9b0">f:updatedReplicas</span><span style="color:#d4d4d4">:</span> <span style="color:#d4d4d4">{}</span></div><div>      <span style="color:#3dc9b0">manager</span><span style="color:#d4d4d4">:</span> <span style="color:#ce9178">kube-controller-manager</span></div><div>      <span style="color:#3dc9b0">operation</span><span style="color:#d4d4d4">:</span> <span style="color:#ce9178">Update</span></div><div>      <span style="color:#3dc9b0">subresource</span><span style="color:#d4d4d4">:</span> <span style="color:#ce9178">status</span></div><div>      <span style="color:#3dc9b0">time</span><span style="color:#d4d4d4">:</span> <span style="color:#b5cea8">2024-03-06T19:54:33.000Z</span></div><div>  <span style="color:#3dc9b0">name</span><span style="color:#d4d4d4">:</span> <span style="color:#ce9178">frontend</span></div><div>  <span style="color:#3dc9b0">namespace</span><span style="color:#d4d4d4">:</span> <span style="color:#ce9178">default</span></div><div>  <span style="color:#3dc9b0">resourceVersion</span><span style="color:#d4d4d4">:</span> <span style="color:#ce9178">&quot;1111&quot;</span></div><div>  <span style="color:#3dc9b0">uid</span><span style="color:#d4d4d4">:</span> <span style="color:#ce9178">ffc47159-e623-4a08-a372-1695332a4020</span></div><div><span style="color:#3dc9b0">spec</span><span style="color:#d4d4d4">:</span></div><div>  <span style="color:#3dc9b0">progressDeadlineSeconds</span><span style="color:#d4d4d4">:</span> <span style="color:#b5cea8">600</span></div><div>  <span style="color:#3dc9b0">replicas</span><span style="color:#d4d4d4">:</span> <span style="color:#b5cea8">3</span></div><div>  <span style="color:#3dc9b0">revisionHistoryLimit</span><span style="color:#d4d4d4">:</span> <span style="color:#b5cea8">10</span></div><div>  <span style="color:#3dc9b0">selector</span><span style="color:#d4d4d4">:</span></div><div>    <span style="color:#3dc9b0">matchLabels</span><span style="color:#d4d4d4">:</span></div><div>      <span style="color:#3dc9b0">app</span><span style="color:#d4d4d4">:</span> <span style="color:#ce9178">guestbook</span></div><div>      <span style="color:#3dc9b0">tier</span><span style="color:#d4d4d4">:</span> <span style="color:#ce9178">frontend</span></div><div>  <span style="color:#3dc9b0">strategy</span><span style="color:#d4d4d4">:</span></div><div>    <span style="color:#3dc9b0">rollingUpdate</span><span style="color:#d4d4d4">:</span></div><div>      <span style="color:#3dc9b0">maxSurge</span><span style="color:#d4d4d4">:</span> <span style="color:#ce9178">25%</span></div><div>      <span style="color:#3dc9b0">maxUnavailable</span><span style="color:#d4d4d4">:</span> <span style="color:#ce9178">25%</span></div><div>    <span style="color:#3dc9b0">type</span><span style="color:#d4d4d4">:</span> <span style="color:#ce9178">RollingUpdate</span></div><div>  <span style="color:#3dc9b0">template</span><span style="color:#d4d4d4">:</span></div><div>    <span style="color:#3dc9b0">metadata</span><span style="color:#d4d4d4">:</span></div><div>      <span style="color:#3dc9b0">creationTimestamp</span><span style="color:#d4d4d4">:</span> <span style="color:#569cd6">null</span></div><div>      <span style="color:#3dc9b0">labels</span><span style="color:#d4d4d4">:</span></div><div>        <span style="color:#3dc9b0">app</span><span style="color:#d4d4d4">:</span> <span style="color:#ce9178">guestbook</span></div><div>        <span style="color:#3dc9b0">tier</span><span style="color:#d4d4d4">:</span> <span style="color:#ce9178">frontend</span></div><div>    <span style="color:#3dc9b0">spec</span><span style="color:#d4d4d4">:</span></div><div>      <span style="color:#3dc9b0">containers</span><span style="color:#d4d4d4">:</span></div><div>        <span style="color:#d4d4d4">- </span><span style="color:#3dc9b0">env</span><span style="color:#d4d4d4">:</span></div><div>            <span style="color:#d4d4d4">- </span><span style="color:#3dc9b0">name</span><span style="color:#d4d4d4">:</span> <span style="color:#ce9178">GET_HOSTS_FROM</span></div><div>              <span style="color:#3dc9b0">value</span><span style="color:#d4d4d4">:</span> <span style="color:#ce9178">dns</span></div><div>          <span style="color:#3dc9b0">image</span><span style="color:#d4d4d4">:</span> <span style="color:#ce9178">quay.io/prometheus/gb-frontend:v6</span></div><div>          <span style="color:#3dc9b0">imagePullPolicy</span><span style="color:#d4d4d4">:</span> <span style="color:#ce9178">IfNotPresent</span></div><div>          <span style="color:#3dc9b0">name</span><span style="color:#d4d4d4">:</span> <span style="color:#ce9178">php-redis</span></div><div>          <span style="color:#3dc9b0">ports</span><span style="color:#d4d4d4">:</span></div><div>            <span style="color:#d4d4d4">- </span><span style="color:#3dc9b0">containerPort</span><span style="color:#d4d4d4">:</span> <span style="color:#b5cea8">8080</span></div><div>              <span style="color:#3dc9b0">protocol</span><span style="color:#d4d4d4">:</span> <span style="color:#ce9178">TCP</span></div><div>          <span style="color:#3dc9b0">resources</span><span style="color:#d4d4d4">:</span></div><div>            <span style="color:#3dc9b0">requests</span><span style="color:#d4d4d4">:</span></div><div>              <span style="color:#3dc9b0">cpu</span><span style="color:#d4d4d4">:</span> <span style="color:#ce9178">100m</span></div><div>              <span style="color:#3dc9b0">memory</span><span style="color:#d4d4d4">:</span> <span style="color:#ce9178">100Mi</span></div><div>          <span style="color:#3dc9b0">terminationMessagePath</span><span style="color:#d4d4d4">:</span> <span style="color:#ce9178">/dev/termination-log</span></div><div>          <span style="color:#3dc9b0">terminationMessagePolicy</span><span style="color:#d4d4d4">:</span> <span style="color:#ce9178">File</span></div><div>      <span style="color:#3dc9b0">dnsPolicy</span><span style="color:#d4d4d4">:</span> <span style="color:#ce9178">ClusterFirst</span></div><div>      <span style="color:#3dc9b0">restartPolicy</span><span style="color:#d4d4d4">:</span> <span style="color:#ce9178">Always</span></div><div>      <span style="color:#3dc9b0">schedulerName</span><span style="color:#d4d4d4">:</span> <span style="color:#ce9178">default-scheduler</span></div><div>      <span style="color:#3dc9b0">securityContext</span><span style="color:#d4d4d4">:</span> <span style="color:#d4d4d4">{}</span></div><div>      <span style="color:#3dc9b0">terminationGracePeriodSeconds</span><span style="color:#d4d4d4">:</span> <span style="color:#b5cea8">30</span></div><div><span style="color:#3dc9b0">status</span><span style="color:#d4d4d4">:</span></div><div>  <span style="color:#3dc9b0">availableReplicas</span><span style="color:#d4d4d4">:</span> <span style="color:#b5cea8">4</span></div><div>  <span style="color:#3dc9b0">conditions</span><span style="color:#d4d4d4">:</span></div><div>    <span style="color:#d4d4d4">- </span><span style="color:#3dc9b0">lastTransitionTime</span><span style="color:#d4d4d4">:</span> <span style="color:#b5cea8">2024-03-06T19:54:33.000Z</span></div><div>      <span style="color:#3dc9b0">lastUpdateTime</span><span style="color:#d4d4d4">:</span> <span style="color:#b5cea8">2024-03-06T19:54:33.000Z</span></div><div>      <span style="color:#3dc9b0">message</span><span style="color:#d4d4d4">:</span> <span style="color:#ce9178">Deployment has minimum availability.</span></div><div>      <span style="color:#3dc9b0">reason</span><span style="color:#d4d4d4">:</span> <span style="color:#ce9178">MinimumReplicasAvailable</span></div><div>      <span style="color:#3dc9b0">status</span><span style="color:#d4d4d4">:</span> <span style="color:#ce9178">&quot;True&quot;</span></div><div>      <span style="color:#3dc9b0">type</span><span style="color:#d4d4d4">:</span> <span style="color:#ce9178">Available</span></div><div>    <span style="color:#d4d4d4">- </span><span style="color:#3dc9b0">lastTransitionTime</span><span style="color:#d4d4d4">:</span> <span style="color:#b5cea8">2024-03-06T19:54:14.000Z</span></div><div>      <span style="color:#3dc9b0">lastUpdateTime</span><span style="color:#d4d4d4">:</span> <span style="color:#b5cea8">2024-03-06T19:54:33.000Z</span></div><div>      <span style="color:#3dc9b0">message</span><span style="color:#d4d4d4">:</span> <span style="color:#ce9178">ReplicaSet &quot;frontend-d4f6b47c7&quot; has successfully progressed.</span></div><div>      <span style="color:#3dc9b0">reason</span><span style="color:#d4d4d4">:</span> <span style="color:#ce9178">NewReplicaSetAvailable</span></div><div>      <span style="color:#3dc9b0">status</span><span style="color:#d4d4d4">:</span> <span style="color:#ce9178">&quot;True&quot;</span></div><div>      <span style="color:#3dc9b0">type</span><span style="color:#d4d4d4">:</span> <span style="color:#ce9178">Progressing</span></div><div>  <span style="color:#3dc9b0">observedGeneration</span><span style="color:#d4d4d4">:</span> <span style="color:#b5cea8">1</span></div><div>  <span style="color:#3dc9b0">readyReplicas</span><span style="color:#d4d4d4">:</span> <span style="color:#b5cea8">3</span></div><div>  <span style="color:#3dc9b0">replicas</span><span style="color:#d4d4d4">:</span> <span style="color:#b5cea8">3</span></div><div>  <span style="color:#3dc9b0">updatedReplicas</span><span style="color:#d4d4d4">:</span> <span style="color:#b5cea8">3</span></div><div>&#8203;</div></div>
</div></div>
<div class="abs" style="left:230px;top:450px;width:1656px;height:9px;background:linear-gradient(rgba(0,0,0,0.6),rgba(0,0,0,0))"></div>
<div class="abs" style="left:1886px;top:450px;width:11.5px;height:907px;background:linear-gradient(90deg,rgba(0,0,0,0),rgba(0,0,0,0.55))"></div>
<div class="abs" style="left:2136px;top:450px;width:1px;height:907px;background:#2a2a2c"></div>
<div class="abs" style="left:2137px;top:1247.3px;width:29px;height:4px;background:#828282"></div>
<svg style="position:absolute;left:0;top:0" width="2280" height="1562">
<rect x="274" y="256.2" width="70" height="70" rx="8" fill="#4ade80"/>
<path fill="#fff" d="M334.96,264.5 C331,264 326,264.6 320.6,266.3 C314,268.6 308.6,273 303.6,278.9 L296,279.3 L283.4,289 L284.8,290.6 L295.1,291.4 L298.7,295.4 C296.8,296 295.8,297 295.2,298.4 L290.5,308.4 L300.9,305.3 C302.8,304.2 303.9,302.2 304.5,300.4 L308.1,304 L309.4,316.2 L319.7,303.5 L320.8,295.4 C327,289 334.4,281 334.96,271 Z"/>
<circle cx="317" cy="282.4" r="4.9" fill="#4ade80"/>
<path d="M2094.8,211.7 L2112,228.9 M2112,211.7 L2094.8,228.9" stroke="#9a9a9a" stroke-width="3" stroke-linecap="round"/>
<rect x="2036.8" y="256" width="87.2" height="64.7" rx="16" fill="#18181b"/>
<g fill="#d4d4d4"><path d="M2075.5,272.8 H2085 C2086,272.8 2086.5,273.5 2087,274.5 H2093.2 C2094,274.5 2094.2,275 2094.2,275.8 C2094.2,276.6 2094,277 2093.2,277 H2067.6 C2066.8,277 2066.6,276.6 2066.6,275.8 C2066.6,275 2066.8,274.5 2067.6,274.5 H2073.6 C2074,273.5 2074.5,272.8 2075.5,272.8 Z"/><path d="M2068.4,278.6 H2092.4 L2090.8,301.5 C2090.7,303 2089.8,304 2088.3,304 H2072.5 C2071,304 2070.1,303 2070,301.5 Z"/></g>
</svg>
<div class="t" style="left:277.60px;top:201.36px;font-size:31px;line-height:39px;color:#a78bfa;letter-spacing:0.52px;font-weight:400;-webkit-text-stroke:0.5px #a78bfa;">Deployments</div>
<div class="t" style="left:486.60px;top:201.36px;font-size:31px;line-height:39px;color:#aaabac;letter-spacing:0px;font-weight:400;-webkit-text-stroke:0px #aaabac;">&gt;</div>
<div class="t" style="left:521.80px;top:201.36px;font-size:31px;line-height:39px;color:#aaabac;letter-spacing:0.15px;font-weight:400;-webkit-text-stroke:0px #aaabac;">Deployment Details</div>
<div class="t" style="left:372.00px;top:256.45px;font-size:44px;line-height:55px;color:#ffffff;letter-spacing:0.1px;font-weight:400;-webkit-text-stroke:0.7px #ffffff;">frontend</div>
<div class="t" style="left:370.60px;top:318.59px;font-size:31.5px;line-height:39px;color:#8a8a8a;letter-spacing:0.55px;font-weight:400;-webkit-text-stroke:0.5px #8a8a8a;">default</div>
<div class="t" style="left:282.30px;top:385.47px;font-size:35px;line-height:44px;color:#aaabac;letter-spacing:0.15px;font-weight:400;-webkit-text-stroke:0.56px #aaabac;">Summary</div>
<div class="t" style="left:501.50px;top:385.47px;font-size:35px;line-height:44px;color:#aaabac;letter-spacing:0.9px;font-weight:400;-webkit-text-stroke:0.56px #aaabac;">Inspect</div>
<div class="t" style="left:690.40px;top:385.47px;font-size:35px;line-height:44px;color:#ffffff;letter-spacing:0.3px;font-weight:400;-webkit-text-stroke:0.56px #ffffff;">Kube</div>
<div class="abs" style="left:656px;top:442px;width:152px;height:6px;background:#8b5cf6"></div>
<svg style="position:absolute;left:0;top:0" width="2280" height="1562" fill="none" stroke-linejoin="round">
<g stroke="#bdbdbd" stroke-width="2.8"><rect x="146.4" y="187.4" width="49.2" height="12" rx="1.5"/><rect x="146.4" y="206.4" width="11.6" height="11.8" rx="1.5"/><rect x="165.2" y="206.4" width="11.6" height="11.8" rx="1.5"/><rect x="184" y="206.4" width="11.6" height="11.8" rx="1.5"/><rect x="146.4" y="225.3" width="30.8" height="11.4" rx="1.5"/><rect x="184" y="225.3" width="11.6" height="11.4" rx="1.5"/></g>
<circle cx="210.5" cy="192.5" r="6.6" fill="#8b5cf6"/>
<path stroke="#bdbdbd" stroke-width="3" d="M171,292.3 L195.6,300.5 L195.6,328.8 L171,342.2 L146.4,328.8 L146.4,300.5 Z M146.4,300.5 L171,308.8 L195.6,300.5 M171,308.8 L171,342.2"/>
<path stroke="#bdbdbd" stroke-width="2.6" d="M171,400 L183.60,404.25 L183.60,418.70 L171,425.61 L158.40,418.70 L158.40,404.25 Z M158.40,404.25 L171,408.50 L183.60,404.25 M171,408.50 L171,425.61 M158.4,420 L171.00,424.25 L171.00,438.70 L158.4,445.61 L145.80,438.70 L145.80,424.25 Z M145.80,424.25 L158.4,428.50 L171.00,424.25 M158.4,428.50 L158.4,445.61 M183.6,420 L196.20,424.25 L196.20,438.70 L183.6,445.61 L171.00,438.70 L171.00,424.25 Z M171.00,424.25 L183.6,428.50 L196.20,424.25 M183.6,428.50 L183.6,445.61 "/>
<path stroke="#bdbdbd" stroke-width="3" d="M146.60,532.90 L146.62,532.61 L146.63,532.31 L146.66,532.02 L146.70,531.73 L146.74,531.43 L146.79,531.14 L146.85,530.85 L146.91,530.56 L146.99,530.28 L147.07,529.99 L147.15,529.71 L147.25,529.43 L147.35,529.15 L147.46,528.88 L147.58,528.60 L147.70,528.34 L147.83,528.07 L147.97,527.81 L148.11,527.55 L148.27,527.30 L148.42,527.05 L148.59,526.80 L148.76,526.56 L148.94,526.32 L149.12,526.09 L149.31,525.86 L149.50,525.64 L149.70,525.42 L149.91,525.21 L150.12,525.00 L150.34,524.80 L150.56,524.61 L150.79,524.42 L151.02,524.24 L151.26,524.06 L151.50,523.89 L151.75,523.72 L152.00,523.57 L152.25,523.41 L152.51,523.27 L152.77,523.13 L153.04,523.00 L153.30,522.88 L153.35,522.78 L153.31,522.50 L153.27,522.22 L153.24,521.94 L153.22,521.66 L153.21,521.38 L153.20,521.09 L153.20,520.81 L153.21,520.53 L153.23,520.25 L153.25,519.96 L153.28,519.68 L153.32,519.40 L153.36,519.12 L153.42,518.85 L153.48,518.57 L153.54,518.30 L153.62,518.02 L153.70,517.75 L153.79,517.48 L153.88,517.22 L153.99,516.95 L154.10,516.69 L154.21,516.44 L154.33,516.18 L154.46,515.93 L154.60,515.68 L154.74,515.44 L154.89,515.20 L155.05,514.96 L155.21,514.73 L155.37,514.50 L155.55,514.28 L155.73,514.06 L155.91,513.84 L156.10,513.63 L156.30,513.43 L156.50,513.23 L156.70,513.04 L156.91,512.85 L157.13,512.67 L157.35,512.49 L157.58,512.32 L157.81,512.15 L158.04,511.99 L158.28,511.84 L158.52,511.69 L158.76,511.55 L159.01,511.42 L159.27,511.29 L159.52,511.17 L159.78,511.06 L160.04,510.95 L160.31,510.85 L160.57,510.76 L160.84,510.67 L161.11,510.59 L161.39,510.52 L161.66,510.46 L161.94,510.40 L162.22,510.35 L162.50,510.31 L162.78,510.27 L163.06,510.24 L163.34,510.22 L163.62,510.21 L163.91,510.20 L164.19,510.20 L164.47,510.21 L164.75,510.23 L165.04,510.25 L165.32,510.28 L165.60,510.32 L165.88,510.36 L166.15,510.42 L166.43,510.48 L166.70,510.54 L166.98,510.62 L167.25,510.70 L167.52,510.79 L167.78,510.88 L168.05,510.99 L168.31,511.10 L168.56,511.21 L168.82,511.33 L169.07,511.46 L169.32,511.60 L169.56,511.74 L169.80,511.89 L170.04,512.05 L170.27,512.21 L170.50,512.37 L170.72,512.55 L170.94,512.73 L171.16,512.91 L171.37,513.10 L171.57,513.30 L171.77,513.50 L171.96,513.70 L172.15,513.91 L172.33,514.13 L172.51,514.35 L172.68,514.58 L172.85,514.81 L173.01,515.04 L173.16,515.28 L173.31,515.52 L173.45,515.76 L173.58,516.01 L173.71,516.27 L173.83,516.52 L173.94,516.78 L174.05,517.04 L174.15,517.31 L174.24,517.57 L174.33,517.84 L174.41,518.11 L174.48,518.39 L174.54,518.66 L174.60,518.94 L174.65,519.22 L174.69,519.50 L174.73,519.78 L174.76,520.06 L174.78,520.34 L174.79,520.62 L174.84,520.64 L175.00,520.47 L175.18,520.31 L175.35,520.16 L175.54,520.01 L175.72,519.86 L175.91,519.72 L176.10,519.58 L176.30,519.45 L176.50,519.33 L176.70,519.21 L176.91,519.09 L177.11,518.98 L177.33,518.88 L177.54,518.78 L177.76,518.69 L177.97,518.60 L178.20,518.52 L178.42,518.44 L178.64,518.37 L178.87,518.31 L179.10,518.25 L179.33,518.20 L179.56,518.15 L179.79,518.11 L180.03,518.08 L180.26,518.05 L180.49,518.03 L180.73,518.01 L180.96,518.00 L181.20,518.00 L181.44,518.00 L181.67,518.01 L181.91,518.03 L182.14,518.05 L182.37,518.08 L182.61,518.11 L182.84,518.15 L183.07,518.20 L183.30,518.25 L183.53,518.31 L183.76,518.37 L183.98,518.44 L184.20,518.52 L184.43,518.60 L184.64,518.69 L184.86,518.78 L185.07,518.88 L185.29,518.98 L185.49,519.09 L185.70,519.21 L185.90,519.33 L186.10,519.45 L186.30,519.58 L186.49,519.72 L186.68,519.86 L186.86,520.01 L187.05,520.16 L187.22,520.31 L187.40,520.47 L187.56,520.64 L187.73,520.80 L187.89,520.98 L188.04,521.15 L188.19,521.34 L188.34,521.52 L188.48,521.71 L188.62,521.90 L188.75,522.10 L188.87,522.30 L188.99,522.50 L189.11,522.71 L189.20,522.88 L189.38,522.96 L189.64,523.09 L189.91,523.22 L190.16,523.36 L190.42,523.51 L190.67,523.67 L190.92,523.83 L191.16,524.00 L191.40,524.18 L191.63,524.36 L191.86,524.54 L192.09,524.74 L192.31,524.94 L192.52,525.14 L192.73,525.35 L192.93,525.57 L193.13,525.79 L193.32,526.01 L193.50,526.24 L193.68,526.48 L193.86,526.72 L194.02,526.96 L194.18,527.21 L194.34,527.46 L194.48,527.72 L194.62,527.98 L194.76,528.25 L194.88,528.51 L195.00,528.78 L195.11,529.06 L195.22,529.34 L195.32,529.61 L195.41,529.90 L195.49,530.18 L195.56,530.47 L195.63,530.75 L195.69,531.04 L195.75,531.33 L195.79,531.63 L195.83,531.92 L195.86,532.22 L195.88,532.51 L195.89,532.81 L195.90,533.10 L195.90,533.40 L195.89,533.69 L195.87,533.99 L195.85,534.28 L195.82,534.58 L195.78,534.87 L195.73,535.16 L195.67,535.45 L195.61,535.74 L195.54,536.03 L195.46,536.31 L195.38,536.60 L195.28,536.88 L195.18,537.16 L195.08,537.43 L194.96,537.71 L194.84,537.98 L194.71,538.24 L194.58,538.51 L194.44,538.76 L194.29,539.02 L194.13,539.27 L193.97,539.52 L193.80,539.76 L193.62,540.00 L193.44,540.23 L193.26,540.46 L193.06,540.69 L192.86,540.91 L192.66,541.12 L192.45,541.33 L192.23,541.53 L192.01,541.73 L191.79,541.92 L191.56,542.10 L191.32,542.28 L191.08,542.46 L190.84,542.62 L190.59,542.78 L190.34,542.94 L190.08,543.08 L189.82,543.22 L189.55,543.36 L189.29,543.48 L189.02,543.60 L188.74,543.71 L188.46,543.82 L188.19,543.92 L187.90,544.01 L187.62,544.09 L187.33,544.16 L187.05,544.23 L186.76,544.29 L186.47,544.35 L186.17,544.39 L185.88,544.43 L185.58,544.46 L185.29,544.48 L184.99,544.49 L184.70,544.50 L184.50,544.50 L184.33,544.50 L184.20,544.50 L184.01,544.48 L183.81,544.47 L183.62,544.46 L183.39,544.50 L182.99,544.50 L182.59,544.50 L182.18,544.50 L181.78,544.50 L181.38,544.50 L180.98,544.50 L180.57,544.50 L180.17,544.50 L179.77,544.50 L179.37,544.50 L178.96,544.50 L178.56,544.50 L178.16,544.50 L177.76,544.50 L177.35,544.50 L176.95,544.50 L176.55,544.50 L176.15,544.50 L175.74,544.50 L175.34,544.50 L174.94,544.50 L174.54,544.50 L174.13,544.50 L173.73,544.50 L173.33,544.50 L172.93,544.50 L172.52,544.50 L172.12,544.50 L171.72,544.50 L171.32,544.50 L170.91,544.50 L170.51,544.50 L170.11,544.50 L169.71,544.50 L169.30,544.50 L168.90,544.50 L168.50,544.50 L168.10,544.50 L167.69,544.50 L167.29,544.50 L166.89,544.50 L166.49,544.50 L166.08,544.50 L165.68,544.50 L165.28,544.50 L164.88,544.50 L164.47,544.50 L164.07,544.50 L163.67,544.50 L163.27,544.50 L162.86,544.50 L162.46,544.50 L162.06,544.50 L161.66,544.50 L161.25,544.50 L160.85,544.50 L160.45,544.50 L160.05,544.50 L159.64,544.50 L159.24,544.50 L158.84,544.50 L158.71,544.50 L158.59,544.48 L158.39,544.49 L158.20,544.50 L158.03,544.50 L157.90,544.50 L157.60,544.50 L157.31,544.48 L157.01,544.47 L156.72,544.44 L156.43,544.40 L156.13,544.36 L155.84,544.31 L155.55,544.25 L155.26,544.19 L154.98,544.11 L154.69,544.03 L154.41,543.95 L154.13,543.85 L153.85,543.75 L153.58,543.64 L153.30,543.52 L153.04,543.40 L152.77,543.27 L152.51,543.13 L152.25,542.99 L152.00,542.83 L151.75,542.68 L151.50,542.51 L151.26,542.34 L151.02,542.16 L150.79,541.98 L150.56,541.79 L150.34,541.60 L150.12,541.40 L149.91,541.19 L149.70,540.98 L149.50,540.76 L149.31,540.54 L149.12,540.31 L148.94,540.08 L148.76,539.84 L148.59,539.60 L148.42,539.35 L148.27,539.10 L148.11,538.85 L147.97,538.59 L147.83,538.33 L147.70,538.06 L147.58,537.80 L147.46,537.52 L147.35,537.25 L147.25,536.97 L147.15,536.69 L147.07,536.41 L146.99,536.12 L146.91,535.84 L146.85,535.55 L146.79,535.26 L146.74,534.97 L146.70,534.67 L146.66,534.38 L146.63,534.09 L146.62,533.79 L146.60,533.50 L146.60,533.20 Z"/>
<g stroke="#bdbdbd" stroke-width="3"><ellipse cx="171" cy="624.3" rx="24.6" ry="6.4"/><path d="M146.4,624.3 V640.3 A24.6,6.4 0 0 0 195.6,640.3 V624.3"/></g>
</svg>
<svg style="position:absolute;left:0;top:0" width="2280" height="1562" fill="none" stroke-linejoin="round" stroke-linecap="round">
<g transform="translate(196.4,724.6) rotate(45)" stroke="#fff" stroke-width="2.6"><path d="M0,1.2 C3,2.8 8.5,9 9.8,18 C10.6,24 10.6,30 8.8,38.5 L-8.8,38.5 C-10.6,30 -10.6,24 -9.8,18 C-8.5,9 -3,2.8 0,1.2 Z"/><path d="M-8.6,16 L8.6,16"/><path d="M-8.4,38.5 L-8.4,44.5 L8.4,44.5 L8.4,38.5"/><path d="M-10.4,31.5 L-16.4,37.4 L-18.4,53.4 L-8.4,44.8"/><path d="M10.4,31.5 L16.4,37.4 L18.4,53.4 L8.4,44.8"/><path d="M-3.4,45.5 Q-4.2,54 0.1,59.8 Q4.4,54 3.4,45.5"/><circle cx="0" cy="24.7" r="3.8"/></g>
<g stroke="#bdbdbd" stroke-linecap="butt" stroke-linejoin="miter"><rect x="160.6" y="837.8" width="21" height="9.2" stroke-width="2.8"/><path d="M171.3,848.4 V864 M153.3,864 V856.4 H189.3 V864" stroke-width="2.1"/><rect x="146.4" y="865.4" width="13.2" height="9" stroke-width="2.8"/><rect x="164.6" y="865.4" width="13.2" height="9" stroke-width="2.8"/><rect x="183.1" y="865.4" width="12.6" height="9" stroke-width="2.8"/></g>
<path stroke="#bdbdbd" stroke-width="2.4" stroke-linecap="butt" stroke-linejoin="miter" d="M161.3,958.4 V953.2 H146.2 V968.8 H161.3 V963.4 H171.4 V975.6 Q171.4,984.1 180,984.1 H186.2 V985.8 H195.8 V976.2 H186.2 V979.7 H176.8 V963.4 H186.2 V966.8 H195.8 V956.2 H186.2 V958.4 H176.8 V943.8 H186.2 V946.3 H195.8 V936.2 H186.2 V938.4 H180 Q171.4,938.4 171.4,947 V958.4 Z"/>
<path d="M160.6,1031.4 L171,1021 L181.4,1031.4" stroke="#fff" stroke-width="3"/>
<path stroke="#fff" stroke-width="2.5" d="M159.5,1108.5 H171.5 C173,1108.5 173.5,1106 172,1104.5 C168.5,1101 170,1096 176,1096 C182,1096 183.5,1101 180,1104.5 C178.5,1106 179,1108.5 180.5,1108.5 H196 V1119 C196,1120.5 194,1121 192.5,1119.5 C189,1116 186.5,1120 186.5,1125.5 C186.5,1131 189,1135 192.5,1131.5 C194,1130 196,1130.5 196,1132 V1145.8 H180.5 C179,1145.8 178.5,1144 180,1142.5 C183.5,1139 182,1133.5 176,1133.5 C170,1133.5 168.5,1139 172,1142.5 C173.5,1144 173,1145.8 171.5,1145.8 H159.5 V1132 C159.5,1130.5 157.5,1130 156,1131.5 C152.5,1135 147.5,1131.5 147.5,1125.5 C147.5,1119.5 152.5,1116 156,1119.5 C157.5,1121 159.5,1120.5 159.5,1119 Z"/>
<path d="M160.6,1183.4 L171,1193.8 L181.4,1183.4" stroke="#fff" stroke-width="3"/>
<path stroke="#bdbdbd" stroke-width="3" d="M163.04,1283.65 Q163.50,1281.50 165.70,1281.50 L170.80,1281.50 Q173.00,1281.50 173.46,1283.65 L174.35,1287.82 Q174.50,1288.50 175.08,1288.89 L178.42,1291.11 Q179.00,1291.50 179.67,1291.31 L183.88,1290.10 Q186.00,1289.50 187.19,1291.35 L189.31,1294.65 Q190.50,1296.50 188.94,1298.06 L185.49,1301.51 Q185.00,1302.00 185.00,1302.70 L185.00,1307.30 Q185.00,1308.00 185.49,1308.49 L188.94,1311.94 Q190.50,1313.50 189.31,1315.35 L187.19,1318.65 Q186.00,1320.50 183.88,1319.90 L179.67,1318.69 Q179.00,1318.50 178.42,1318.89 L175.08,1321.11 Q174.50,1321.50 174.35,1322.18 L173.46,1326.35 Q173.00,1328.50 170.80,1328.50 L165.70,1328.50 Q163.50,1328.50 163.04,1326.35 L162.15,1322.18 Q162.00,1321.50 161.42,1321.11 L158.08,1318.89 Q157.50,1318.50 156.83,1318.69 L152.62,1319.90 Q150.50,1320.50 149.31,1318.65 L147.19,1315.35 Q146.00,1313.50 147.56,1311.94 L151.01,1308.49 Q151.50,1308.00 151.50,1307.30 L151.50,1302.70 Q151.50,1302.00 151.01,1301.51 L147.56,1298.06 Q146.00,1296.50 147.19,1294.65 L149.31,1291.35 Q150.50,1289.50 152.62,1290.10 L156.83,1291.31 Q157.50,1291.50 158.08,1291.11 L161.42,1288.89 Q162.00,1288.50 162.15,1287.82 Z"/>
<circle cx="168.25" cy="1305" r="7.6" stroke="#bdbdbd" stroke-width="3"/>
</svg>
<div class="abs" style="left:1384.3px;top:1249.3px;width:279.6px;height:68.9px;box-sizing:border-box;border:2.2px solid #f2f2f2;border-radius:11.5px;background:#0f0f11"></div>
<div class="t" style="left:1420.10px;top:1265.65px;font-size:29px;line-height:36px;color:#ffffff;letter-spacing:0.27px;font-weight:400;-webkit-text-stroke:0.46px #ffffff;">Revert changes</div>
<div class="abs" style="left:1681px;top:1248.9px;width:399px;height:65px;border-radius:11px;background:#6d48bf"></div>
<div class="t" style="left:1717.00px;top:1262.81px;font-size:30px;line-height:38px;color:#ffffff;letter-spacing:0.07px;font-weight:400;-webkit-text-stroke:0.48px #ffffff;">Apply changes to cluster</div>
<div class="abs" style="left:112px;top:1357px;width:2056px;height:57px;background:#31234f"></div>
<svg style="position:absolute;left:0;top:0" width="2280" height="1562">
<path d="M144.90,1369.10 L156.55,1374.71 L159.43,1387.32 L151.36,1397.42 L138.44,1397.42 L130.37,1387.32 L133.25,1374.71 Z" fill="#fff" stroke="#fff" stroke-width="3" stroke-linejoin="round"/>
<g stroke="#31234f" fill="none"><circle cx="144.9" cy="1384.3" r="7.2" stroke-width="1.5"/>
<path d="M144.90,1384.30 L144.90,1376.90 M144.90,1384.30 L150.69,1379.69 M144.90,1384.30 L152.11,1385.95 M144.90,1384.30 L148.11,1390.97 M144.90,1384.30 L141.69,1390.97 M144.90,1384.30 L137.69,1385.95 M144.90,1384.30 L139.11,1379.69 " stroke-width="1.5"/></g>
<circle cx="144.90" cy="1374.10" r="0.75" fill="#31234f"/>
<circle cx="152.87" cy="1377.94" r="0.75" fill="#31234f"/>
<circle cx="154.84" cy="1386.57" r="0.75" fill="#31234f"/>
<circle cx="149.33" cy="1393.49" r="0.75" fill="#31234f"/>
<circle cx="140.47" cy="1393.49" r="0.75" fill="#31234f"/>
<circle cx="134.96" cy="1386.57" r="0.75" fill="#31234f"/>
<circle cx="136.93" cy="1377.94" r="0.75" fill="#31234f"/>
<circle cx="144.9" cy="1384.3" r="2.3" fill="#31234f"/>
<circle cx="144.9" cy="1384.3" r="1.0" fill="#fff"/>
<g fill="#fff"><rect x="341" y="1368.7" width="4.3" height="9" rx="2.1"/><rect x="352.7" y="1368.7" width="4.3" height="9" rx="2.1"/><path d="M338.5,1378.6 H359.5 C360.8,1378.6 361,1379.5 360.6,1380.5 L359.5,1382.2 C358.8,1389 355,1393 351.2,1394 V1398 C351.2,1399.5 350,1400.3 349,1400.3 C348,1400.3 346.8,1399.5 346.8,1398 V1394 C343,1393 339.2,1389 338.5,1382.2 L337.4,1380.5 C337,1379.5 337.2,1378.6 338.5,1378.6 Z"/></g>
<path fill="#fff" d="M1949.6,1372.8 C1958.4,1372.8 1965.2,1378.4 1965.2,1385.4 C1965.2,1392.4 1958.4,1398 1949.6,1398 C1947.4,1398 1945.2,1397.6 1943.2,1396.9 C1940.5,1398.6 1937,1399.8 1934.2,1399.8 C1935.8,1398 1936.6,1395.5 1936.6,1392.8 C1934.9,1390.7 1934,1388.2 1934,1385.4 C1934,1378.4 1940.8,1372.8 1949.6,1372.8 Z"/>
<path fill="#fff" d="M2011.6,1370.8 C2017.6,1370.8 2022,1375.4 2022,1381.2 C2022,1384.6 2020.6,1386.6 2019,1389 C2018,1390.6 2017.2,1392.2 2016.8,1394.2 H2006.4 C2006,1392.2 2005.2,1390.6 2004.2,1389 C2002.6,1386.6 2001.2,1384.6 2001.2,1381.2 C2001.2,1375.4 2005.6,1370.8 2011.6,1370.8 Z"/>
<path fill="#fff" d="M2006.6,1396 H2016.6 V1397.2 C2016.6,1400 2014.4,1402 2011.6,1402 C2008.8,1402 2006.6,1400 2006.6,1397.2 Z"/>
<path d="M2005.6,1382 C2005.8,1378.6 2008,1376.2 2011.6,1375.8" stroke="#31234f" stroke-width="1.7" fill="none" stroke-linecap="round"/>
<circle cx="2073.3" cy="1386.3" r="15.4" fill="#fff"/>
<path d="M2069.6,1382 C2069.8,1380 2071.4,1379.2 2073.3,1379.2 C2075.4,1379.2 2077,1380.4 2077,1382.4 C2077,1384.8 2073.4,1385.6 2073.3,1387.8" stroke="#31234f" stroke-width="2.6" fill="none" stroke-linecap="round"/>
<circle cx="2073.3" cy="1392.4" r="1.7" fill="#31234f"/>
<path fill="#fff" d="M2137,1371 C2138.2,1371 2138.9,1371.8 2139.1,1373 C2144,1374.2 2146.3,1378.4 2146.5,1383.6 C2146.8,1388.4 2147.6,1391 2150,1393.2 C2151.2,1394.4 2150.6,1396.2 2149,1396.2 H2125 C2123.4,1396.2 2122.8,1394.4 2124,1393.2 C2126.4,1391 2127.2,1388.4 2127.5,1383.6 C2127.7,1378.4 2130,1374.2 2134.9,1373 C2135.1,1371.8 2135.8,1371 2137,1371 Z"/>
<path fill="#fff" d="M2133,1397.8 H2141 C2140.6,1400.4 2139,1402 2137,1402 C2135,1402 2133.4,1400.4 2133,1397.8 Z"/>
</svg>
<div class="t" style="left:168.90px;top:1365.91px;font-size:32px;line-height:40px;color:#ffffff;letter-spacing:0.6px;font-weight:400;-webkit-text-stroke:0.51px #ffffff;">kind-kind</div>
<div class="t" style="left:369.00px;top:1365.51px;font-size:32px;line-height:40px;color:#ffffff;letter-spacing:0px;font-weight:400;-webkit-text-stroke:0.51px #ffffff;">Docker Compatibility</div>
<div class="t" style="left:1743.80px;top:1368.79px;font-size:31.5px;line-height:39px;color:#ffffff;letter-spacing:-0.12px;font-weight:400;-webkit-text-stroke:0.5px #ffffff;">v1.8.0-next</div>
</div></div>
<div class="abs" style="left:112px;top:76px;width:2056px;height:1338px;box-sizing:border-box;border-radius:22px;border:2px solid rgba(255,255,255,0.22);border-top-color:rgba(255,255,255,0.36);pointer-events:none"></div>
</body></html>
